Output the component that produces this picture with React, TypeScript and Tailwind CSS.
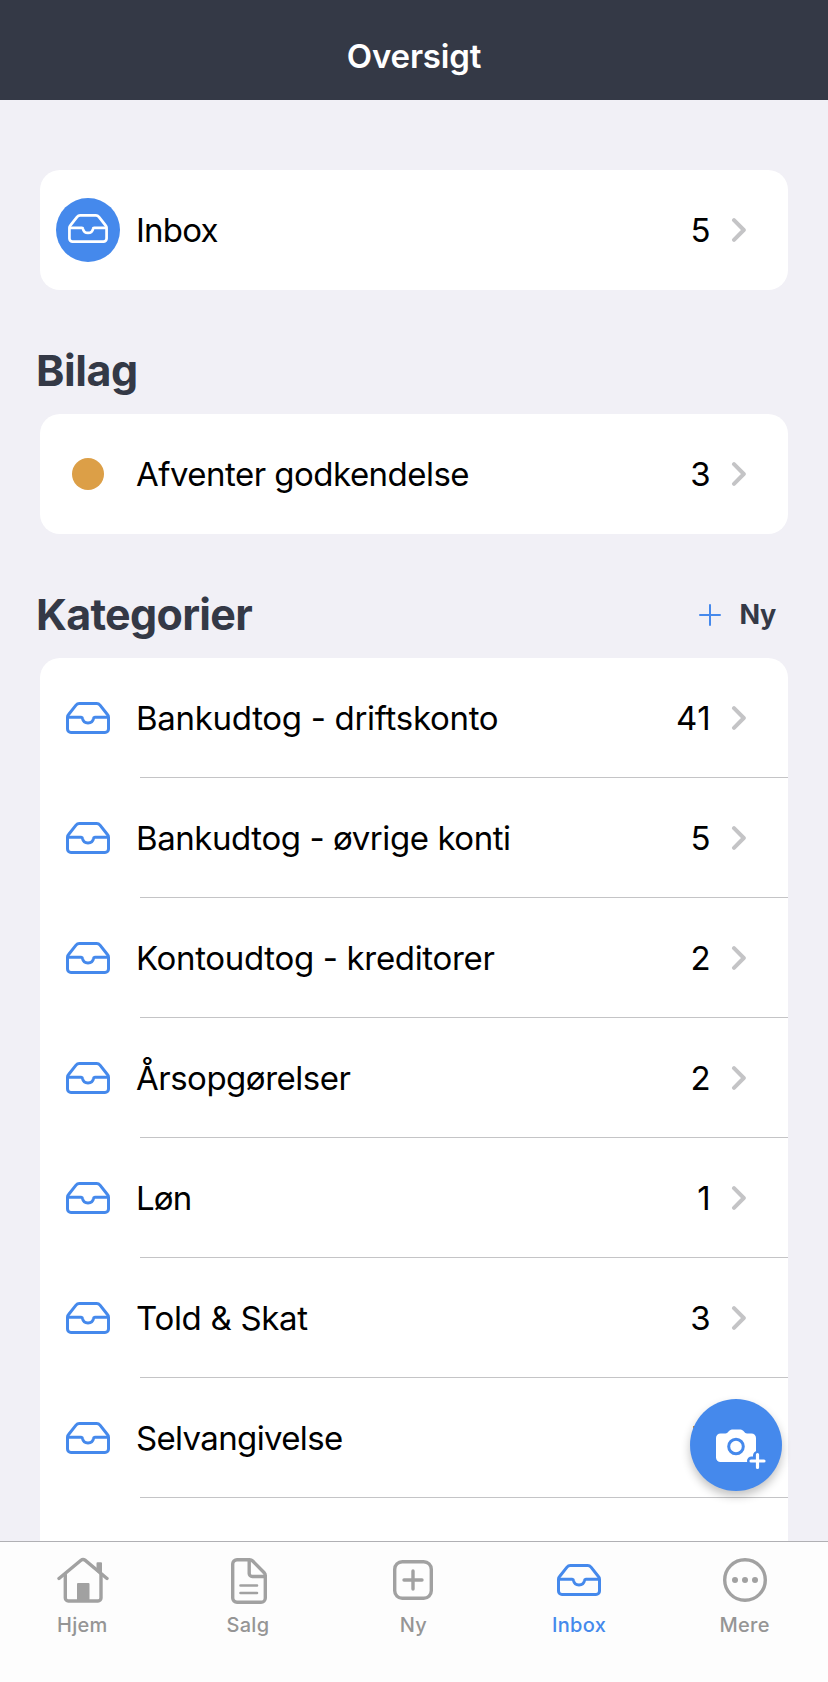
import type { ReactNode } from 'react'

const categories = [
  { name: 'Bankudtog - driftskonto', count: 41, tracking: 'tracking-[-0.3px]' },
  { name: 'Bankudtog - øvrige konti', count: 5, tracking: 'tracking-[-0.43px]' },
  { name: 'Kontoudtog - kreditorer', count: 2, tracking: 'tracking-[-0.33px]' },
  { name: 'Årsopgørelser', count: 2, tracking: 'tracking-[-0.5px]' },
  { name: 'Løn', count: 1, tracking: 'tracking-[-0.9px]' },
  { name: 'Told & Skat', count: 3, tracking: 'tracking-[-0.3px]' },
  { name: 'Selvangivelse', count: 7, tracking: 'tracking-[-0.65px]' },
]

function InboxIcon({ className }: { className: string }) {
  return (
    <svg className={className} viewBox="0 0 44 32" fill="none" stroke="currentColor" strokeWidth="3" strokeLinejoin="round">
      <path d="M1.500 15.200V27a3.500 3.500 0 0 0 3.500 3.500h34a3.500 3.500 0 0 0 3.500-3.500V15.200c0-1-.3-1.700-.9-2.400L34 3.100C33.100 2 32 1.500 30.700 1.500H13.300C12 1.500 10.900 2 10 3.100L2.400 12.800c-.6.7-.9 1.400-.9 2.400z" />
      <path d="M1.500 15.300H15.200c.8 0 1.200.4 1.300 1.200a5.600 5.400 0 0 0 11 0c.1-.8.5-1.200 1.300-1.200H42.500" />
    </svg>
  )
}

function Chevron() {
  return (
    <svg className="w-4 h-6 ml-[20px]" viewBox="0 0 16 24" fill="none" stroke="#c4c4c6" strokeWidth="4" strokeLinecap="round" strokeLinejoin="round">
      <path d="M3 2.200 12.800 12 3 21.800" />
    </svg>
  )
}

type RowProps = { icon: ReactNode; label: string; count: number; tracking: string }

function Row({ icon, label, count, tracking }: RowProps) {
  return (
    <div className="flex items-center h-[120px] pl-4 pr-[41px]">
      <div className="w-16 flex justify-center">{icon}</div>
      <span className={`ml-4 pt-0.5 flex-1 text-[33px] ${tracking}`}>{label}</span>
      <span className="pt-0.5 text-[33px] tracking-[0.4px]">{count}</span>
      <Chevron />
    </div>
  )
}

function Tab({ label, active, children }: { label: string; active?: boolean; children: ReactNode }) {
  return (
    <div className={active ? 'flex-1 flex flex-col items-center text-[#4589ec]' : 'flex-1 flex flex-col items-center text-[#959595]'}>
      <div className="h-[52px] mt-3 flex items-center">{children}</div>
      <span className="mt-[5px] mr-px text-[20px] leading-7 font-medium tracking-[0.3px]">{label}</span>
    </div>
  )
}

export default function App() {
  return (
    <div className="relative h-[1682px] w-[828px] overflow-hidden flex flex-col bg-[#f1f0f6] text-black font-['Inter',sans-serif]">
      <header className="h-[100px] shrink-0 bg-[#343946] flex justify-center pt-9">
        <h1 className="text-[33px] leading-10 font-semibold text-white tracking-[-0.15px]">Oversigt</h1>
      </header>

      <main className="flex-1 min-h-0 overflow-hidden px-10 pt-[70px]">
        <section className="bg-white rounded-[20px]">
          <Row
            icon={
              <div className="size-16 rounded-full bg-[#4589ec] text-white flex items-center justify-center">
                <InboxIcon className="w-10 h-[29px] -mt-[3px]" />
              </div>
            }
            label="Inbox"
            count={5}
            tracking="tracking-[-0.8px]"
          />
        </section>

        <div className="h-[124px] pt-[54px] -ml-[4px]">
          <h2 className="text-[43px] leading-[52px] font-bold text-[#343946] tracking-[-0.4px]">Bilag</h2>
        </div>
        <section className="bg-white rounded-[20px]">
          <Row
            icon={<div className="size-8 rounded-full bg-[#dc9f47]" />}
            label="Afventer godkendelse"
            count={3}
            tracking="tracking-[-0.52px]"
          />
        </section>

        <div className="h-[124px] pt-[54px] -ml-[4px] pr-3 flex justify-between">
          <h2 className="text-[43px] leading-[52px] font-bold text-[#343946] tracking-[-0.7px]">Kategorier</h2>
          <button className="flex items-center h-[54px] gap-[18px] text-[27px] tracking-[-0.3px] font-bold text-[#343946]">
            <svg className="size-[22px]" viewBox="0 0 22 22" stroke="#4589ec" strokeWidth="2" strokeLinecap="round">
              <path d="M11 1v20M1 11h20" />
            </svg>
            Ny
          </button>
        </div>
        <section className="bg-white rounded-t-[20px] h-[960px]">
          {categories.map(c => (
            <div key={c.name}>
              <Row icon={<InboxIcon className="w-11 h-8 text-[#4589ec]" />} label={c.name} count={c.count} tracking={c.tracking} />
              <div className="h-px -mt-px ml-[100px] bg-[#c4c4c6]" />
            </div>
          ))}
        </section>
      </main>

      <button className="absolute left-[690px] top-[1399px] size-[92px] rounded-full bg-[#4589ec] shadow-[0_5px_10px_rgba(0,0,0,0.24)] flex items-center justify-center">
        <svg className="w-[52px] h-[44px] ml-[12px] mt-[7px]" viewBox="0 0 52 44" fill="none">
          <path
            d="M4.500 6.500H9.500C12 6.500 13 2.500 16 2.500H24.500C27.500 2.500 28.500 6.500 31 6.500H35.500a4.500 4.500 0 0 1 4.500 4.500V30.500a4.500 4.500 0 0 1-4.500 4.500H4.500A4.500 4.500 0 0 1 0 30.500V11a4.500 4.500 0 0 1 4.500-4.500z"
            fill="#fff"
          />
          <circle cx="20" cy="19.500" r="7.300" stroke="#4589ec" strokeWidth="3" />
          <path d="M41.500 28.500v12M35.500 34h12" stroke="#4589ec" strokeWidth="9" strokeLinecap="round" />
          <path d="M41.500 27.500v13M35 34h13" stroke="#fff" strokeWidth="3.200" strokeLinecap="round" />
        </svg>
      </button>

      <nav className="h-[141px] shrink-0 bg-[#fdfdfd] border-t border-[#b0b0b4] flex">
        <Tab label="Hjem">
          <svg className="w-[52px] h-[46px]" viewBox="0 0 52 46" fill="none" stroke="#a1a1a1" strokeWidth="3.400" strokeLinecap="round" strokeLinejoin="round">
            <path d="M2 21.500 24 3.200Q26 1.600 28 3.200L50 21.500" />
            <path d="M8.300 17.500V41a3 3 0 0 0 3 3H41a3 3 0 0 0 3-3V17.500" />
            <path d="M40.500 6.300h3.500V17l-3.500-3z" fill="#a1a1a1" strokeWidth="2" />
            <path d="M21 27h10.500v16.500H21z" fill="#a1a1a1" strokeWidth="2" />
          </svg>
        </Tab>
        <Tab label="Salg">
          <svg className="w-9 h-[46px] ml-px mt-px" viewBox="0 0 36 46" fill="none" stroke="#a1a1a1" strokeWidth="3.400" strokeLinecap="round" strokeLinejoin="round">
            <path d="M6 1.700H18.500C20 1.700 20.700 2 21.700 3L33 14.500c1 1 1.300 1.700 1.300 3V40a4.300 4.300 0 0 1-4.300 4.300H6A4.300 4.300 0 0 1 1.700 40V6A4.300 4.300 0 0 1 6 1.700z" />
            <path d="M18.200 2.500V15.500a3 3 0 0 0 3 3H33.500" />
            <path d="M9.500 27.500h16.500M9.500 35h16.500" strokeWidth="2.600" />
          </svg>
        </Tab>
        <Tab label="Ny">
          <svg className="size-10 mr-0.5" viewBox="0 0 40 40" fill="none" stroke="#a1a1a1" strokeWidth="3.400" strokeLinecap="round">
            <rect x="1.700" y="1.700" width="36.600" height="36.600" rx="7.500" />
            <path d="M20 11v18M11 20h18" />
          </svg>
        </Tab>
        <Tab label="Inbox" active>
          <InboxIcon className="w-11 h-8 mr-0.5" />
        </Tab>
        <Tab label="Mere">
          <svg className="size-11" viewBox="0 0 44 44" fill="#a1a1a1">
            <circle cx="22" cy="22" r="20.300" fill="none" stroke="#a1a1a1" strokeWidth="3.400" />
            <circle cx="12" cy="22" r="3" />
            <circle cx="22" cy="22" r="3" />
            <circle cx="32" cy="22" r="3" />
          </svg>
        </Tab>
      </nav>
    </div>
  )
}
